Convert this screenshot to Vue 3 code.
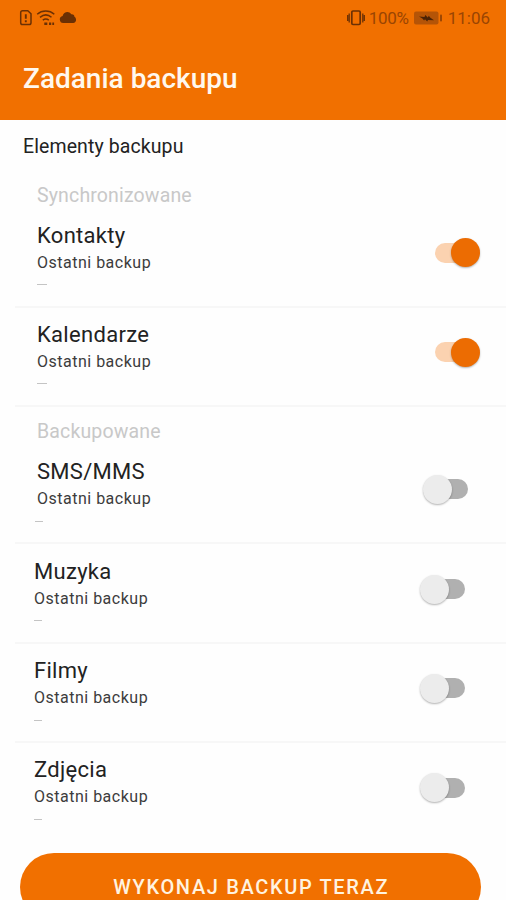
<template>
  <div class="screen">
    <header class="app-bar">
      <div class="status-bar">
        <div class="status-left">
          <svg class="ico-sim" viewBox="0 0 14 18" fill="none" stroke="currentColor">
            <path d="M3.500 1.800h5.300l3.200 3v9a1.800 1.800 0 0 1-1.800 1.800H3.500a1.800 1.800 0 0 1-1.800-1.800V3.600a1.800 1.800 0 0 1 1.800-1.800z" stroke-width="1.500" />
            <path d="M6.800 5.200v4.600M6.800 11.300v2" stroke-width="1.900" />
          </svg>
          <svg class="ico-wifi" viewBox="0 0 20 18" fill="none" stroke="currentColor">
            <path d="M1.200 5.200C6 .9 13.500.9 18.300 5.200M4 8.300c3.600-3 8-3 11.500 0M6.800 11.200c2-1.500 4-1.500 6 0" stroke-width="1.500" />
            <path d="M8.300 14.800h3M13 14.800h2.200M16.300 14.800h1.800" stroke-width="2.400" />
          </svg>
          <svg class="ico-cloud" viewBox="0 0 18 13" fill="currentColor">
            <path d="M4.200 12A3.600 3.600 0 0 1 3.600 4.900 C4.600 1.200 9.500-.9 12.300 3.200 C14.800 3 15.500 4.600 15.400 5.800 C18.200 7.600 17.200 12 14.200 12z" />
          </svg>
        </div>
        <div class="status-right">
          <svg class="ico-vibrate" viewBox="0 0 20 18" fill="none" stroke="currentColor">
            <rect x="5.800" y="2" width="8.400" height="13.500" rx="1.200" stroke-width="1.700" />
            <path d="M3.200 4.500v9M1.700 6v6M16.800 4.500v9M18.300 6v6" stroke-width="1.300" />
          </svg>
          <span class="percent">100%</span>
          <svg class="ico-battery" viewBox="0 0 30 14">
            <rect x="1" y=".5" width="24.500" height="13" rx="2" fill="#b55407" />
            <rect x="27" y="3.500" width="2" height="7" rx=".8" fill="#9d4703" />
            <path d="M6 5.500l5.500.4.800-2 2.500 2.500 1-1.600 1.600 2 3.600 2.500-6-.4-.8 1.500-2.200-2.200-.9 1.400-1.700-2.200z" fill="#4b2205" />
          </svg>
          <span class="clock">11:06</span>
        </div>
      </div>
      <h1 class="title">Zadania backupu</h1>
    </header>

    <main class="content">
      <h2 class="heading">Elementy backupu</h2>
      <section v-for="group in groups" :key="group.label" class="group">
        <h3 class="group-label">{{ group.label }}</h3>
        <div v-for="item in group.items" :key="item.name" class="row" :class="{ media: item.media }">
          <div class="row-text">
            <span class="name">{{ item.name }}</span>
            <span class="last">Ostatni backup</span>
            <span class="date" :class="{ short: !item.enabled, outset: item.outset }"></span>
          </div>
          <button
            class="switch"
            :class="{ on: item.enabled }"
            role="switch"
            :aria-checked="item.enabled"
            :aria-label="item.name"
            @click="item.enabled = !item.enabled"
          >
            <span class="thumb"></span>
          </button>
        </div>
      </section>
    </main>

    <footer class="footer">
      <button class="run">WYKONAJ BACKUP TERAZ</button>
    </footer>
  </div>
</template>

<script setup>
import { reactive } from 'vue'

const groups = reactive([
  {
    label: 'Synchronizowane',
    items: [
      { name: 'Kontakty', enabled: true },
      { name: 'Kalendarze', enabled: true },
    ],
  },
  {
    label: 'Backupowane',
    items: [
      { name: 'SMS/MMS', enabled: false, outset: true },
      { name: 'Muzyka', enabled: false, media: true },
      { name: 'Filmy', enabled: false, media: true },
      { name: 'Zdjęcia', enabled: false, media: true },
    ],
  },
])
</script>

<style>
body { margin: 0; background: #fefefe; overflow: hidden; }
</style>

<style scoped>
.screen {
  display: flex;
  flex-direction: column;
  width: 506px;
  height: 900px;
  overflow: hidden;
  background: #fefefe;
  font-family: Roboto, "Liberation Sans", sans-serif;
  color: #222;
}
h1, h2, h3 { margin: 0; font-weight: 400; }
button { border: 0; padding: 0; font-family: inherit; }
svg { display: block; flex: none; }

.app-bar {
  flex: none;
  height: 120px;
  background: #f17000;
}
.status-bar {
  display: flex;
  justify-content: space-between;
  align-items: center;
  height: 36px;
  padding: 0 16px 0 19px;
  box-sizing: border-box;
  color: #6b3004;
}
.status-left, .status-right { display: flex; align-items: center; }
.ico-sim { width: 14px; height: 18px; }
.ico-wifi { width: 20px; height: 18px; margin-left: 3px; }
.ico-cloud { width: 18px; height: 13px; margin-left: 3px; margin-top: -2px; }
.ico-vibrate { width: 20px; height: 18px; }
.ico-battery { width: 30px; height: 14px; margin-left: 4px; }
.percent, .clock {
  font-size: 17px;
  line-height: 36px;
  color: #9a4503;
}
.percent { margin-left: 3px; letter-spacing: -0.3px; }
.clock { margin-left: 5px; }

.title {
  padding: 26px 23px 0;
  font-size: 28px;
  line-height: 34px;
  font-weight: 500;
  color: #fff8ee;
}

.content { flex: none; height: 732px; }
.heading {
  height: 50.5px;
  padding-left: 23px;
  font-size: 19.5px;
  line-height: 54px;
  letter-spacing: 0.1px;
}
.group-label {
  height: 38px;
  padding-left: 37px;
  font-size: 19.5px;
  line-height: 50.5px;
  letter-spacing: 0.15px;
  color: #c8c8c8;
}

.row {
  display: flex;
  justify-content: space-between;
  height: 99.3px;
  margin-left: 15px;
  padding: 13.2px 38px 0 22px;
  box-sizing: border-box;
  border-bottom: 2px solid #f7f7f7;
}
.row.media { padding: 13.5px 41px 0 19px; }
.group:last-child .row:last-child { border-bottom-color: transparent; }
.row-text { display: flex; flex-direction: column; align-items: flex-start; }
.name {
  font-size: 22px;
  line-height: 28px;
  letter-spacing: 0.3px;
}
.last {
  font-size: 16px;
  line-height: 25px;
  letter-spacing: 0.5px;
  color: #3c3c3c;
}
.date {
  width: 10px;
  height: 1px;
  margin-top: 9.500px;
  background: #c4c4c4;
}
.date.short { width: 8px; }
.date.outset { margin-left: -2px; }

.switch {
  display: flex;
  align-items: center;
  width: 38px;
  height: 20px;
  margin-top: 21.2px;
  border-radius: 10px;
  background: #b0b0b0;
}
.thumb {
  flex: none;
  width: 29px;
  height: 29px;
  margin-left: -7px;
  border-radius: 50%;
  background: #ececec;
  box-shadow: 0 1px 2px rgba(0, 0, 0, 0.3);
}
.switch.on {
  justify-content: flex-end;
  margin-right: -5px;
  background: #fbd2b0;
}
.switch.on .thumb { margin: 0 -7px 0 0; background: #ec6c02; }

.footer { flex: none; padding: 1px 25px 0 20px; }
.run {
  display: block;
  width: 100%;
  height: 68px;
  border-radius: 34px;
  background: #f17000;
  color: #fff3e0;
  font-size: 20px;
  line-height: 68px;
  font-weight: 500;
  letter-spacing: 1.65px;
  text-indent: 1.5px;
}
</style>
